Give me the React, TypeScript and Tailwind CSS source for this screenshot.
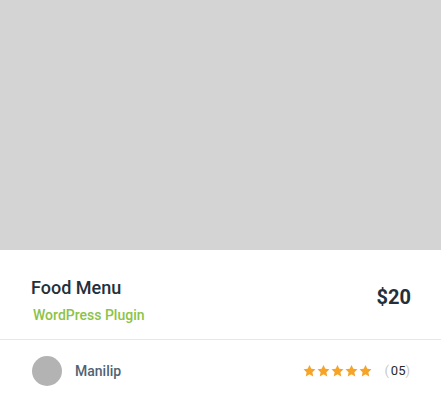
const Star = () => (
  <svg viewBox="2 2.5 20 19" className="w-[13px] h-[12px]" fill="#f7a325">
    <path d="M12 2.5l2.9 6.1 6.6.8-4.9 4.6 1.3 6.6L12 17.3l-5.9 3.3 1.3-6.6-4.9-4.6 6.6-.8z" />
  </svg>
);

export default function App() {
  return (
    <div className="w-[441px] h-[408px] bg-white font-['Roboto',sans-serif]">
      <div className="h-[250px] bg-[#d4d4d4]" />
      <div className="flex items-center justify-between h-[90px] border-b border-[#e8e8e8] pl-[31px] pr-[30px]">
        <div className="flex flex-col mt-[10px]">
          <h3 className="text-[18px] leading-[24px] font-medium text-[#23303b]">Food Menu</h3>
          <span className="mt-[6px] ml-[2px] text-[14px] leading-[18px] font-medium text-[#8bc34a]">
            WordPress Plugin
          </span>
        </div>
        <span className="text-[20px] leading-[24px] font-bold text-[#23303b] mt-[4px]">$20</span>
      </div>
      <div className="flex items-center justify-between h-[62px] pl-[32px] pr-[31px]">
        <div className="flex items-center gap-[13px]">
          <div className="w-[30px] h-[30px] rounded-full bg-[#b3b3b3]" />
          <span className="text-[14px] font-medium text-[#4f6373]">Manilip</span>
        </div>
        <div className="flex items-center">
          <div className="flex gap-[1px]">
            <Star />
            <Star />
            <Star />
            <Star />
            <Star />
          </div>
          <span className="ml-[12px] text-[13px] text-[#2b2b2b]">
            <span className="text-[#c8c8c8]">(</span>
            <span className="ml-[2px]">05</span>
            <span className="text-[#c8c8c8]">)</span>
          </span>
        </div>
      </div>
    </div>
  );
}
